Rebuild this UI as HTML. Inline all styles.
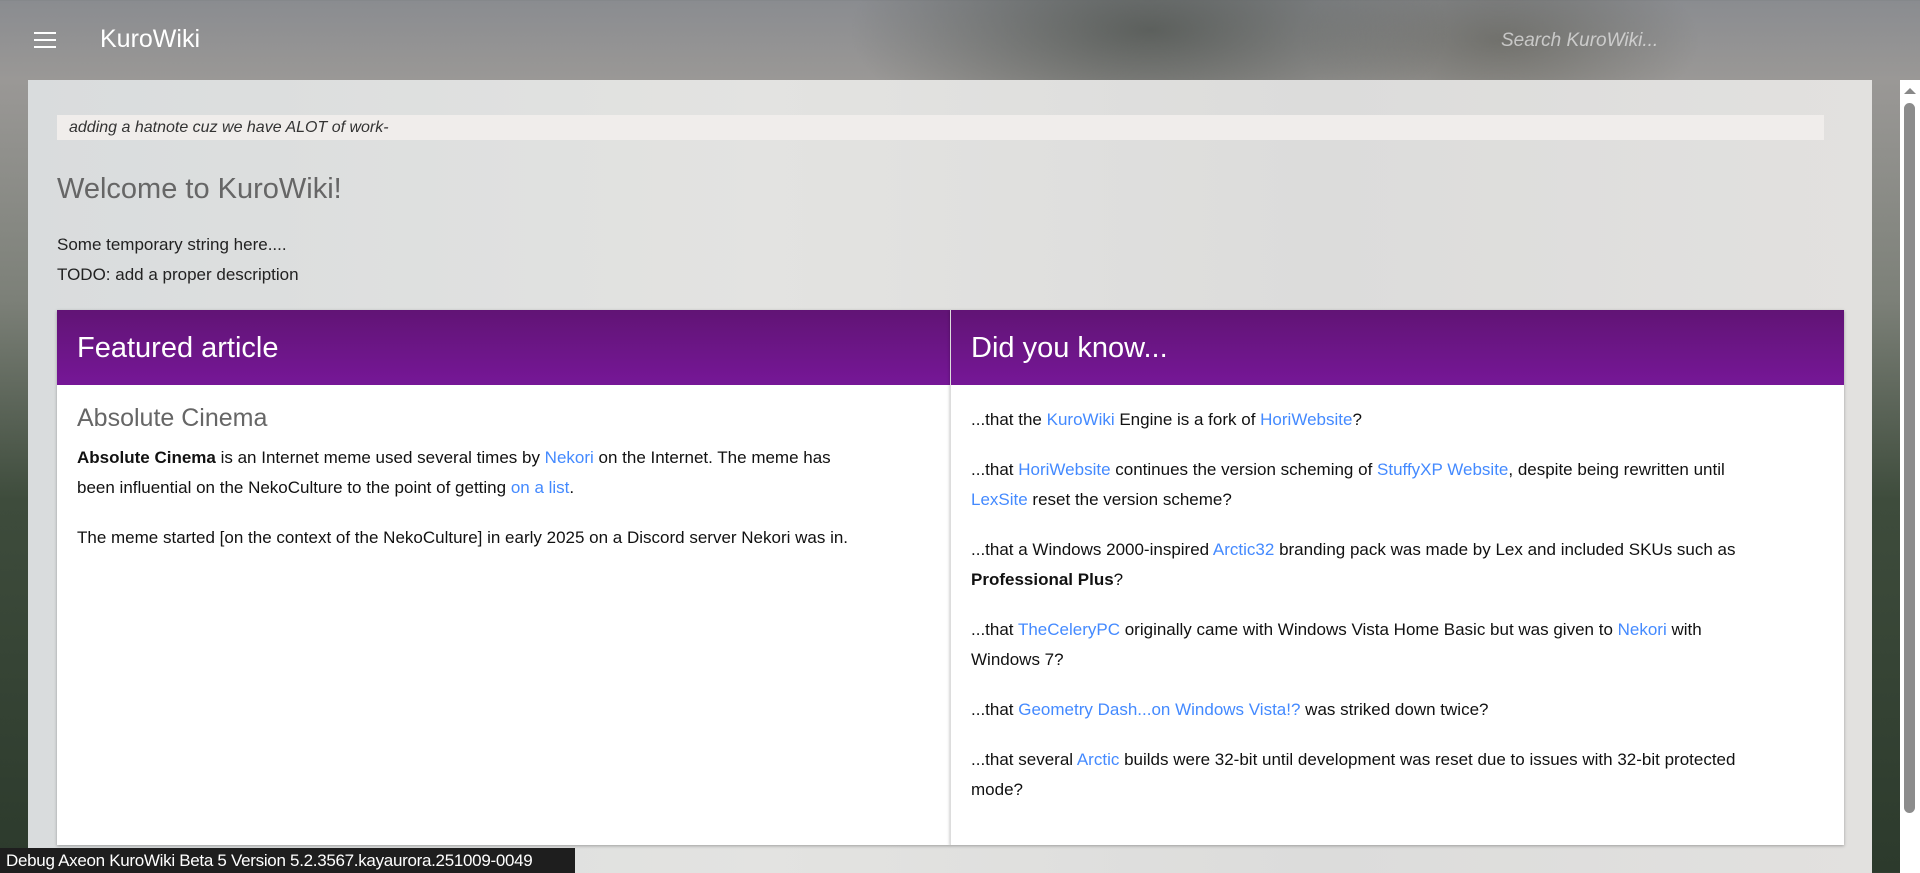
<!DOCTYPE html>
<html><head><meta charset="utf-8"><style>
*{margin:0;padding:0;box-sizing:border-box}
html,body{width:1920px;height:873px;overflow:hidden}
body{font-family:"Liberation Sans",sans-serif;position:relative;
background:
radial-gradient(ellipse 300px 120px at 1150px 30px,rgba(70,75,70,.7),transparent),
radial-gradient(ellipse 200px 90px at 1500px 40px,rgba(80,80,70,.5),transparent),
linear-gradient(180deg,#8a8c90 0px,#9a9896 80px,#7c8078 300px,#3e4c3c 500px,#2c3a2c 873px);}
.hdr{position:absolute;left:0;top:0;width:1920px;height:80px}
.ham{position:absolute;left:34px;top:32px;width:22px;height:16px}
.ham i{display:block;height:2px;background:#fff;margin-bottom:5px}
.title{position:absolute;left:100px;top:25px;font-size:25px;color:#fff;font-weight:300}
.search{position:absolute;left:1501px;top:30px;font-size:19px;font-style:italic;color:rgba(235,235,235,.7)}
.card{position:absolute;left:28px;top:80px;width:1844px;height:800px;
background:linear-gradient(90deg,#d9dcdd,#e3e3e1 40%,#dcdcdb 70%,#e2e1df);}
.hat{position:absolute;left:29px;top:35px;width:1767px;height:25px;background:#f0edeb;font-size:16px;font-style:italic;color:#333;padding:4px 12px;line-height:17px}
h1{position:absolute;left:29px;top:93px;font-size:29px;font-weight:400;color:#666}
.intro{position:absolute;left:29px;top:150px;font-size:17px;line-height:30px;color:#222}
.box{position:absolute;top:230px;height:535px;background:#fff;box-shadow:0 1px 3px rgba(0,0,0,.3)}
.box .bh{height:75px;background:linear-gradient(180deg,#611475,#761797);color:#fff;font-size:29px;font-weight:300;padding:22px 20px 0}
.box .bb{padding:18px 20px;font-size:17px;line-height:30px;color:#111}
.box p{margin-bottom:20px}
a{color:#448aff;text-decoration:none}
h2{font-size:25px;font-weight:400;color:#666;margin:0 0 10px;line-height:30px}
.scroll{position:absolute;left:1900px;top:80px;width:20px;height:793px;background:#fff}
.scroll .th{position:absolute;left:4px;top:23px;width:11px;height:710px;background:#8c8c8c;border-radius:6px}
.scroll .up{position:absolute;left:4px;top:8px;border-left:6px solid transparent;border-right:6px solid transparent;border-bottom:6px solid #888}
.dbg{position:absolute;left:0;top:848px;width:575px;height:25px;background:#1e1e1e;color:#fff;font-size:17px;padding:3px 6px;letter-spacing:-.3px}
</style></head><body>
<div class="hdr"><div class="ham"><i></i><i></i><i></i></div><div class="title">KuroWiki</div><div class="search">Search KuroWiki...</div></div>
<div class="card">
<div class="hat">adding a hatnote cuz we have ALOT of work-</div>
<h1>Welcome to KuroWiki!</h1>
<div class="intro">Some temporary string here....<br>TODO: add a proper description</div>
<div class="box" style="left:29px;width:893px">
<div class="bh">Featured article</div>
<div class="bb"><h2>Absolute Cinema</h2>
<p><b>Absolute Cinema</b> is an Internet meme used several times by <a>Nekori</a> on the Internet. The meme has<br>been influential on the NekoCulture to the point of getting <a>on a list</a>.</p>
<p>The meme started [on the context of the NekoCulture] in early 2025 on a Discord server Nekori was in.</p></div>
</div>
<div class="box" style="left:922px;width:894px;border-left:1px solid #ddd">
<div class="bh">Did you know...</div>
<div class="bb" style="padding-top:20px">
<p>...that the <a>KuroWiki</a> Engine is a fork of <a>HoriWebsite</a>?</p>
<p>...that <a>HoriWebsite</a> continues the version scheming of <a>StuffyXP Website</a>, despite being rewritten until<br><a>LexSite</a> reset the version scheme?</p>
<p>...that a Windows 2000-inspired <a>Arctic32</a> branding pack was made by Lex and included SKUs such as<br><b>Professional Plus</b>?</p>
<p>...that <a>TheCeleryPC</a> originally came with Windows Vista Home Basic but was given to <a>Nekori</a> with<br>Windows 7?</p>
<p>...that <a>Geometry Dash...on Windows Vista!?</a> was striked down twice?</p>
<p>...that several <a>Arctic</a> builds were 32-bit until development was reset due to issues with 32-bit protected<br>mode?</p>
</div></div>
</div>
<div class="scroll"><div class="up"></div><div class="th"></div></div>
<div class="dbg">Debug Axeon KuroWiki Beta 5 Version 5.2.3567.kayaurora.251009-0049</div>
</body></html>
